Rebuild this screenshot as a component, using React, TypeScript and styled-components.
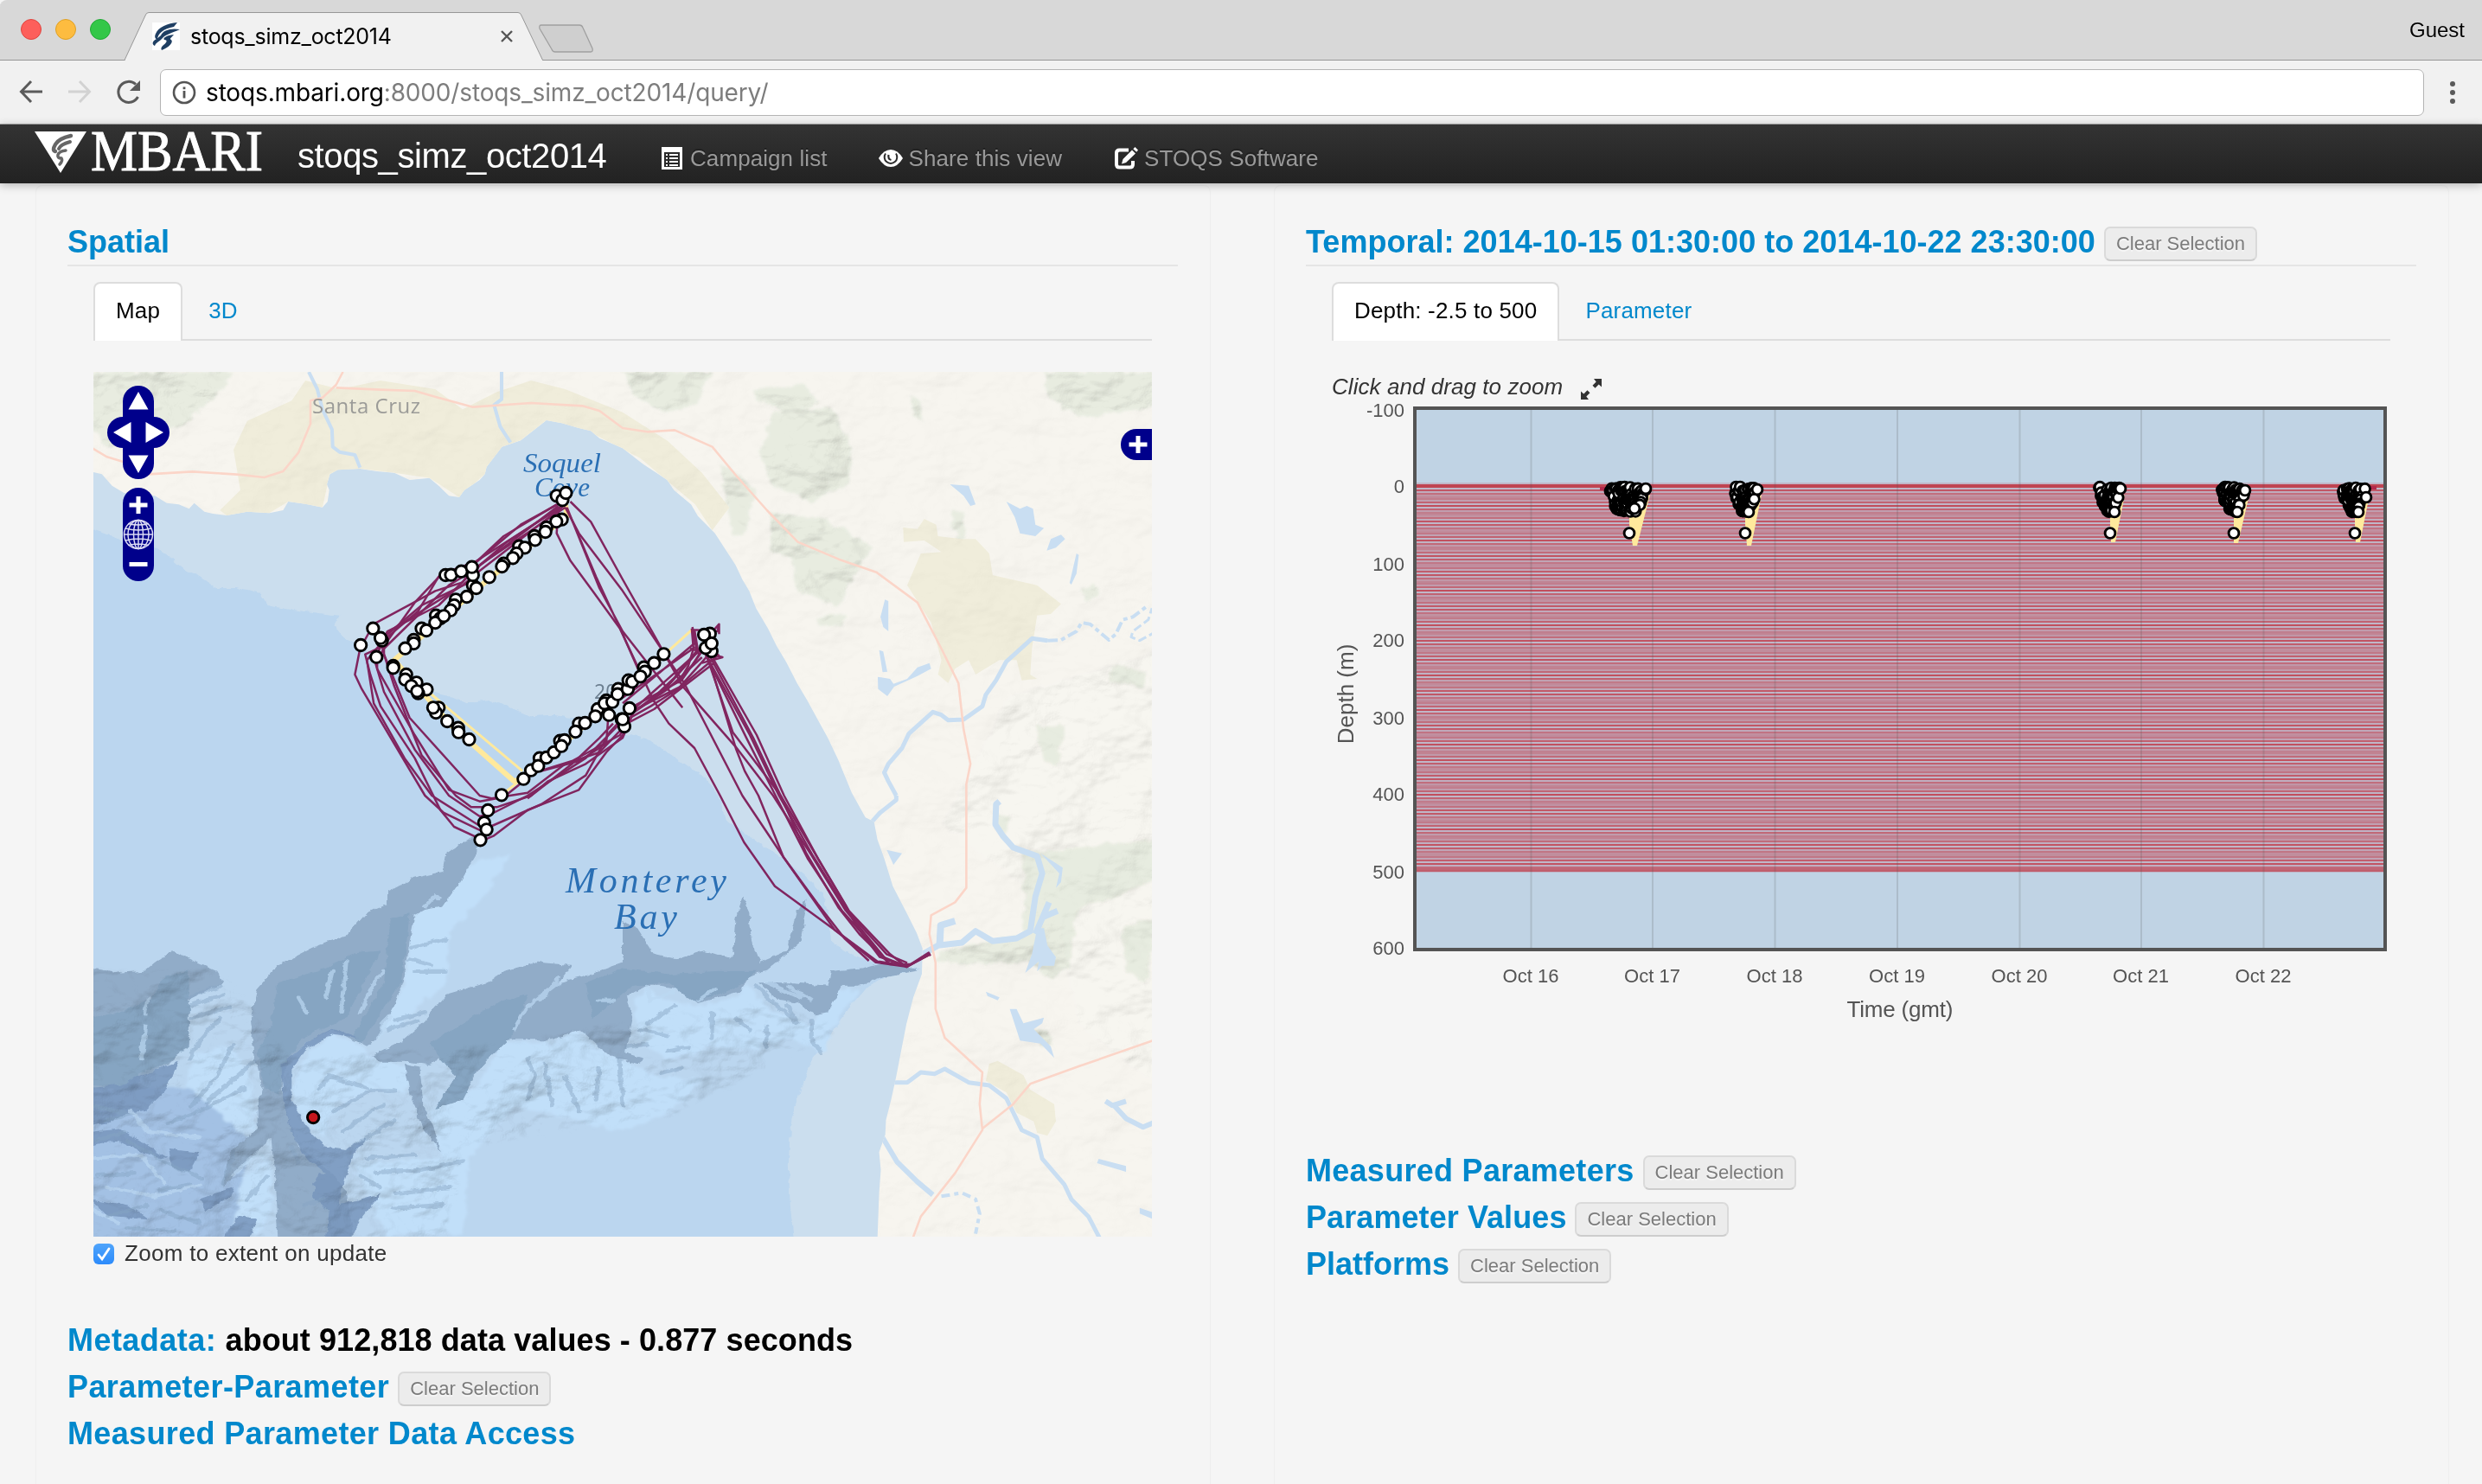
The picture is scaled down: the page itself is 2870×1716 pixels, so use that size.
import React from "react";
import styled, { createGlobalStyle } from "styled-components";

const sans = `"Liberation Sans", Arial, sans-serif`;
const chromeSans = `Inter, "Liberation Sans", sans-serif`;

const GlobalStyle = createGlobalStyle`
  body { margin: 0; background: #f5f5f5; font-family: ${sans}; }
  * { box-sizing: border-box; }
`;

/* ---------- browser chrome ---------- */

const Window = styled.div`
  display: flex;
  flex-direction: column;
  width: 2870px;
  height: 1716px;
  overflow: hidden;
  background: #f5f5f5;
`;

const TabStrip = styled.header`
  display: flex;
  align-items: flex-end;
  height: 70px;
  flex: none;
  background: #d8d8d8;
  box-shadow: inset 0 -1px 0 #979797;
  border-top-left-radius: 8px;
`;

const Lights = styled.div`
  display: flex;
  gap: 16px;
  width: 144px;
  padding: 0 0 24px 24px;
`;

const Light = styled.span<{ $fill: string; $edge: string }>`
  width: 24px;
  height: 24px;
  border-radius: 50%;
  background: ${(p) => p.$fill};
  border: 1px solid ${(p) => p.$edge};
`;

const Tab = styled.div`
  position: relative;
  display: flex;
  align-items: center;
  gap: 12px;
  width: 484px;
  height: 56px;
  padding: 0 34px 0 32px;
`;

const TabShape = styled.svg`
  position: absolute;
  inset: 0;
`;

const Favicon = styled.svg`
  position: relative;
  flex: none;
  background: #fff;
`;

const TabTitle = styled.span`
  position: relative;
  flex: 1;
  font: 25px/30px ${chromeSans};
  letter-spacing: -0.25px;
  color: #000;
`;

const TabClose = styled.svg`
  position: relative;
`;

const NewTab = styled.svg`
  margin: 0 0 8px -6px;
`;

const Guest = styled.span`
  margin: 0 20px 20px auto;
  font: 24px/30px ${sans};
  color: #000;
  text-shadow: 0 1px 0 #f0f0f0;
`;

const Toolbar = styled.div`
  display: flex;
  align-items: center;
  height: 74px;
  flex: none;
  background: #f1f1f1;
  border-bottom: 1px solid #a8a8a8;
`;

const NavButtons = styled.svg`
  width: 185px;
  height: 73px;
  flex: none;
`;

const AddressBar = styled.div`
  display: flex;
  align-items: center;
  gap: 11px;
  width: 2618px;
  height: 54px;
  padding-left: 13px;
  background: #fff;
  border: 1px solid #b4b4b4;
  border-radius: 7px;
`;

const Address = styled.span`
  font: 28px/40px ${chromeSans};
  letter-spacing: -0.15px;
  color: #7d7d7d;
`;

const Host = styled.span`
  color: #000;
`;

const Kebab = styled.div`
  display: flex;
  flex-direction: column;
  gap: 4px;
  margin-left: 30px;
`;

const Dot = styled.i`
  width: 6px;
  height: 6px;
  border-radius: 50%;
  background: #5a5a5a;
`;

/* ---------- site navbar ---------- */

const Navbar = styled.nav`
  display: flex;
  align-items: center;
  height: 68px;
  flex: none;
  padding-left: 40px;
  background: linear-gradient(#333, #222);
  box-shadow: 0 2px 10px rgba(0, 0, 0, 0.28);
  z-index: 1;
`;

const Logo = styled.svg`
  overflow: visible;
`;

const Brand = styled.span`
  margin: 3px 0 0 38px;
  width: 419px;
  font-size: 40px;
  line-height: 50px;
  letter-spacing: -0.4px;
  color: #fff;
`;

const NavLink = styled.a<{ $gap: number }>`
  display: flex;
  align-items: center;
  margin: 9px ${(p) => p.$gap}px 0 0;
  font-size: 26px;
  line-height: 40px;
  letter-spacing: 0.08px;
  color: #999;
  text-shadow: 0 -2px 0 rgba(0, 0, 0, 0.25);
  white-space: nowrap;
`;

const NavIcon = styled.svg`
  width: 28px;
  height: 28px;
  margin-right: 7px;
`;

/* ---------- page body ---------- */

const Main = styled.main`
  display: flex;
  gap: 73px;
  flex: 1;
  padding: 2px 0 0 41px;
`;

const Well = styled.section`
  display: flex;
  flex-direction: column;
  width: 1359px;
  padding: 37px 37px 0 36px;
  border: 1px solid #eeeeee;
  border-bottom: 0;
  border-radius: 8px 8px 0 0;
`;

const HeadingRow = styled.div<{ $ruled?: boolean }>`
  display: flex;
  align-items: center;
  height: ${(p) => (p.$ruled ? 56 : 54)}px;
  border-bottom: ${(p) => (p.$ruled ? "2px solid #e5e5e5" : "0")};
`;

const Heading = styled.h4<{ $spacing?: number }>`
  margin: 2px 0 0;
  font-size: 36px;
  line-height: 54px;
  letter-spacing: ${(p) => p.$spacing ?? 0}px;
  font-weight: bold;
  color: #0088cc;
  white-space: pre;
`;

const Ink = styled.span`
  letter-spacing: 0.08px;
  color: #000;
`;

const ClearButton = styled.button`
  height: 40px;
  margin: 6px 0 0 10px;
  padding: 0 12px;
  border: 2px solid #dadada;
  border-bottom-color: #cdcdcd;
  border-radius: 7px;
  background: #ececec;
  font: 22px/34px ${sans};
  color: #7b7b7b;
  text-shadow: 0 2px 1px rgba(255, 255, 255, 0.6);
  white-space: nowrap;
`;

const Tabs = styled.div`
  display: flex;
  height: 68px;
  margin: 18px 30px 0;
  box-shadow: inset 0 -2px 0 #ddd;
`;

const TabItem = styled.a<{ $active?: boolean }>`
  margin-right: 4px;
  padding: 0 24px;
  border: 2px solid ${(p) => (p.$active ? "#ddd" : "transparent")};
  border-bottom: 0;
  border-radius: 8px 8px 0 0;
  background: ${(p) => (p.$active ? "#fff" : "transparent")};
  font-size: 26px;
  line-height: 62px;
  letter-spacing: 0.18px;
  color: ${(p) => (p.$active ? "#000" : "#0088cc")};
`;

const MapFrame = styled.svg`
  display: block;
  width: 1224px;
  height: 1000px;
  margin: 36px 0 0 30px;
`;

const ZoomRow = styled.label`
  display: flex;
  align-items: center;
  gap: 12px;
  height: 24px;
  margin: 8px 0 60px 30px;
  font-size: 26px;
  line-height: 22px;
  letter-spacing: 0.3px;
  color: #333;
`;

const CheckMark = styled.svg`
  width: 24px;
  height: 24px;
  border-radius: 6px;
  background: linear-gradient(#4fa4fb, #2c8bfb);
`;

const CheckText = styled.span`
  margin-top: -3px;
`;

const Caption = styled.div`
  display: flex;
  align-items: center;
  gap: 20px;
  height: 34px;
  margin: 36px 0 0 30px;
  font-size: 26px;
  letter-spacing: 0.06px;
  font-style: italic;
  color: #333;
`;

const ExpandIcon = styled.svg`
  margin-top: 5px;
`;

const ChartFrame = styled.svg`
  display: block;
  width: 1230px;
  height: 726px;
  margin: 0 0 136px 30px;
  flex: none;
  overflow: visible;
`;

/* ---------- map ---------- */

type Pt = [number, number];

/* Survey-grid units to screen pixels. */
const toPx = ([u, v]: Pt): Pt => [100 + u / 2.529, 420 + v / 3];
const GRID = "translate(100 420) scale(0.39541 0.33333)";
const LOWER = "translate(0 1500) scale(1 1.0142)";

const coast =
  "M20 378 45 385 75 425 110 450 200 460 235 485 270 490 300 505 315 485 345 515 370 522 410 528 470 515 535 520 575 510 590 480 640 488 690 500 705 480 710 440 703 420 712 385 735 370 800 366 850 375 900 380 945 405 1003 398 1030 425 1060 460 1090 465 1105 440 1150 405 1165 385 1170 360 1215 290 1270 268 1345 198 1390 208 1440 225 1475 235 1500 260 1568 295 1628 350 1698 405 1718 440 1768 490 1788 530 1838 590 1868 645 1898 700 1918 750 1938 790 1958 850 1993 920 2018 980 2048 1040 2078 1110 2108 1170 2138 1235 2168 1300 2198 1375 2238 1490 2278 1576 2303 1590 2313 1652 2333 1718 2358 1814 2398 1906 2428 1977 2445 2030 2443 2119 2418 2200 2398 2291 2383 2382 2368 2474 2353 2555 2338 2626 2336 2676 2318 2737 2323 2798 2318 2879 2313 3040 3130 3040 3130 20 10 20Z";

const shelf =
  "M10 570 80 600 150 650 200 640 240 670 290 720 330 740 380 780 440 780 510 800 530 840 600 855 700 870 740 875 725 910 760 960 790 975 850 1020 900 1050 980 1130 1050 1150 1110 1180 1180 1170 1240 1195 1300 1225 1360 1220 1420 1230 1500 1230 1570 1280 1600 1290 1650 1310 1700 1350 1760 1400 1800 1430 1850 1500 1868 1581 1948 1652 2018 1703 2098 1774 2148 1835 2168 1906 2178 2007 2248 2058 2350 2090 2440 2100 2330 2130 2288 2159 2228 2240 2188 2311 2128 2403 2098 2484 2073 2575 2058 2666 2053 2778 2058 2920 2068 3040 10 3040Z";

const canyons = [
  "M10 590 100 605 170 600 200 570 255 530 300 560 380 600 400 640 300 700 300 850 240 920 160 960 140 1010 10 1000Z",
  "M1150 130 1140 200 1090 300 1040 380 990 390 960 410 945 500 930 620 900 720 850 830 820 860 720 800 640 850 590 900 570 1000 590 1100 620 1200 700 1270 760 1350 780 1520 560 1520 550 1300 540 1170 400 1340 420 1220 500 1140 500 1060 515 1000 490 900 480 760 500 660 560 580 660 520 760 480 820 400 880 370 880 330 960 280 1040 260 1050 200 1100 160Z",
  "M835 890 920 840 990 770 1050 680 1170 640 1220 600 1320 570 1420 580 1380 640 1450 620 1568 570 1568 430 1608 450 1658 540 1728 560 1808 530 1888 560 1898 420 1918 350 1938 400 1945 500 1968 570 2048 530 2078 400 2108 350 2088 500 1998 590 1938 620 1908 670 1788 710 1728 660 1678 650 1638 650 1578 690 1598 760 1575 880 1632 900 1610 920 1530 890 1440 800 1360 835 1215 835 1140 950 1100 1040 1020 1070 1080 970 1100 850 1000 920 940 910 860 910Z",
  "M1968 640 2068 640 2168 650 2178 600 2268 590 2328 570 2428 590 2428 600 2328 620 2258 650 2208 650 2168 740 2128 750 2088 710 2018 700Z",
  "M930 920 975 930 985 1060 1040 1220 990 1150 950 1040Z",
];

const deepPatches = [
  "M10 1000 100 990 150 960 270 910 230 1010 170 1080 110 1090 60 1120 10 1130Z",
  "M10 1150 100 1140 240 1240 180 1230 90 1180 10 1200Z",
  "M570 920 640 850 720 795 800 830 720 815 640 870 600 940 600 1040 640 1130 700 1200 760 1210 820 1170 780 1230 750 1330 700 1400 660 1330 700 1290 640 1240 600 1150 575 1040Z",
  "M240 1210 330 1220 300 1290 250 1270Z",
  "M680 1290 750 1320 740 1400 860 1360 800 1450 770 1520 700 1520 710 1420 660 1370Z",
  "M330 1380 430 1340 420 1370 350 1420Z",
  "M400 1520 440 1440 500 1450 470 1520Z",
  "M10 1380 120 1400 180 1450 60 1440Z",
];

const innerCanyon = [
  "M10 760 100 740 190 690 230 620 295 600 300 700 300 860 230 920 150 950 140 1000 10 990Z",
  "M560 640 680 600 780 540 860 530 760 760 700 790 620 840 580 920 560 1020 520 1000 500 880 540 780Z",
  "M890 420 945 400 935 520 920 640 850 760 800 850 780 820 870 640 880 520Z",
  "M1000 850 1100 780 1200 710 1290 680 1240 830 1140 940 1100 1040 1020 1070 1080 960Z",
  "M1460 640 1568 590 1700 610 1850 600 1960 600 1900 660 1780 705 1700 640 1600 650 1480 760Z",
];

const gleams = [
  "M700 690 720 600M745 740 760 560 748 690M620 690 645 740M865 780 890 750 850 830M800 740 850 620 870 600",
  "M160 900 175 780 165 880M180 690 170 750M990 380 1020 340 1030 350",
  "M1250 800 1290 720 1380 640M1380 620 1330 700M1500 700 1540 700",
  "M1640 650 1650 700 1720 670M1790 700 1840 660M1990 640 2090 690M2050 650 2120 700",
  "M130 1080 180 1150 330 1170M20 1240 160 1230 230 1330M60 1340 200 1370 330 1330M20 1420 90 1460M430 1300 500 1220 540 1260M470 1420 540 1380",
];

const creases = [
  "M300 690 390 650M300 720 400 680M310 760 420 720M390 760 330 840 300 900",
  "M310 1060 380 960 430 850M350 1050 440 960 490 910M240 1120 330 1080 460 1000",
  "M950 520 1050 490M945 560 1010 580M960 600 1050 600M900 770 990 740M880 800 970 770",
  "M680 1000 710 960 820 1000M720 1080 830 1010 900 1010M750 1150 830 1080 870 1060M780 1200 900 1110M820 1240 960 1230M850 1290 980 1280 1100 1250M900 1360 1060 1340M900 1410 1040 1400",
  "M1290 900 1310 960 1290 1040M1340 920 1360 1060M1400 960 1440 1080M1500 930 1490 1040M1560 900 1568 1060M1620 800 1700 820M1720 720 1640 780M1830 740 1828 830M1900 760 1940 800M1990 790 1986 860M1580 860 1640 850M1700 870 1760 860M1740 930 1680 950",
  "M1960 650 2000 700 2080 780 2050 720M2120 770 2120 830 2150 880",
  "M20 1060 120 1090 60 1110M30 1180 110 1150M120 1180 240 1260 340 1310M210 1350 300 1330M30 1300 140 1290M60 1440 180 1400M220 1420 330 1460M120 1480 260 1490",
  "M430 1220 400 1330M470 1380 530 1300M600 1200 620 1260M640 1400 690 1380M800 1300 860 1340",
];

const ridges = [
  "M720 815 650 880 600 1000 630 1100 690 1170 740 1050 860 1000 930 1020 950 920 850 910 800 850Z",
  "M1150 220 1240 200 1170 340 1060 470 1050 640 900 800 850 800 930 640 960 410Z",
  "M1215 845 1360 845 1430 800 1500 870 1568 900 1660 960 1800 970 1740 1060 1568 1150 1250 1060 1120 1240 1100 1500 880 1500 780 1260 1040 1240 1000 1080 1140 1000Z",
  "M310 880 420 860 480 960 500 1140 300 1200 200 1170 150 1160 230 1080 290 1000Z",
  "M1600 700 1640 660 1700 700 1780 720 1900 690 1930 640 2000 740 2120 780 2170 720 2190 660 2260 670 2180 800 2160 880 2060 830 1960 870 1830 860 1700 900 1620 850Z",
  "M870 600 880 610 850 720 840 800 760 820 800 690Z",
  "M440 1310 540 1240 540 1420 500 1500 400 1420Z",
];

const urban = [
  "M430 300 470 200 600 130 640 60 740 90 860 60 1020 90 1100 160 1200 100 1300 60 1400 90 1568 170 1700 270 1800 380 1880 500 1830 580 1780 490 1620 330 1490 250 1345 198 1270 268 1215 290 1165 385 1090 465 1003 398 900 380 800 366 712 385 690 500 590 480 535 520 410 528 390 510 450 440Z",
  "M2388 570 2430 575 2450 540 2485 560 2490 600 2560 610 2600 610 2640 660 2650 735 2780 770 2850 835 2820 870 2780 875 2765 990 2760 1080 2780 1095 2735 1100 2720 1030 2670 1030 2600 1080 2580 1030 2540 1060 2520 1110 2490 1080 2500 1030 2470 900 2400 770 2440 660 2500 655 2450 615 2390 620Z",
  "M2640 2430 2665 2420 2740 2470 2760 2520 2830 2570 2835 2630 2810 2680 2780 2670 2770 2630 2720 2600 2690 2530 2630 2490Z",
];

const greens = [
  "M10 30 430 30 380 110 300 200 200 260 60 290 10 220Z",
  "M1568 30 1830 30 1780 150 1690 170 1600 110Z",
  "M2010 170 2180 150 2240 300 2230 420 2120 480 2000 420 1970 300Z",
  "M2000 520 2160 540 2300 640 2240 740 2200 850 2080 790 2060 680 2000 640Z",
  "M1950 90 2090 70 2140 130 2060 180 1960 130Z",
  "M2800 30 3130 30 3130 150 2900 190 2810 110Z",
  "M1850 340 1960 440 1930 580 1890 600Z",
  "M2410 120 2440 130 2450 200 2420 180Z",
  "M2535 510 2565 520 2570 600 2550 620 2530 570Z",
  "M2140 880 2220 870 2210 915 2140 910Z",
  "M2910 780 2950 770 2960 810 2920 820Z",
  "M2780 1260 2860 1260 2840 1400 2800 1380Z",
  "M3000 1050 3100 1070 3090 1120 2990 1110Z",
  "M2740 1700 3130 1650 3130 1790 2900 1900 2870 2100 2820 2140 2760 2080 2480 2080 2500 2040 2740 1980Z",
  "M2660 1560 2700 1580 2680 1650 2660 1620Z",
  "M2740 2300 2800 2310 2830 2370 2790 2370Z",
  "M3030 1960 3130 1920 3100 2150 3040 2110Z",
];

const lakes = [
  "M2525 420 2580 425 2600 490 2585 495 2565 460Z",
  "M2690 480 2730 505 2750 495 2768 505 2775 560 2800 572 2775 600 2730 590 2715 535Z",
  "M2808 650 2820 610 2850 595 2862 610 2835 640Z",
  "M2895 660 2902 665 2895 730 2880 768 2875 762Z",
  "M2335 820 2345 825 2345 930 2330 915 2322 880Z",
  "M2318 995 2330 1000 2342 1070 2328 1072Z",
  "M2314 1088 2350 1095 2360 1112 2400 1095 2430 1055 2465 1040 2470 1060 2430 1085 2362 1122 2342 1155 2315 1130Z",
  "M2340 1688 2385 1700 2360 1740Z",
  "M2780 1960 2800 1960 2810 2020 2835 2060 2830 2090 2795 2090 2780 2110 2785 2075 2745 2115 2765 2050Z",
  "M2790 1700 2855 1750 2850 1800 2835 1820 2845 1770Z",
  "M2700 2240 2720 2240 2740 2290 2800 2270 2795 2290 2770 2310 2820 2370 2830 2410 2790 2360 2730 2350Z",
  "M2630 2180 2670 2200 2665 2210 2635 2195Z",
  "M2960 2760 3040 2785 3040 2805 2955 2775Z",
  "M3080 2930 3130 2950 3130 2975 3080 2950Z",
];

const rivers: { d: string; w: number; dash?: string }[] = [
  { d: "M650 30 675 90 690 160 718 230 720 290 740 308 785 318 800 362", w: 4 },
  { d: "M1214 30 1214 125 1192 145 1210 220 1240 275", w: 4 },
  { d: "M2368 1500 2345 1450 2333 1420 2345 1390 2385 1335 2405 1285 2475 1210 2500 1220 2520 1238 2565 1236 2620 1190 2630 1150 2660 1100 2690 1035 2765 955 2810 962", w: 5 },
  { d: "M2810 962 2850 960 2895 930 2910 900 2935 905 2990 960 3010 940 3030 890 3060 880 3105 840", w: 4, dash: "12 4 5 4" },
  { d: "M3130 930 3080 962 3055 950 3060 930 3105 890 3116 850", w: 3, dash: "10 4" },
  { d: "M2368 1500 2368 1515 2320 1560 2290 1600", w: 5 },
  { d: "M2445 2050 2490 2020 2560 2010 2600 1970 2650 2005 2720 1995 2760 1970 2775 1850 2795 1770 2780 1710 2710 1680 2680 1640 2658 1600 2660 1530 2670 1520", w: 7 },
  { d: "M2495 2020 2498 1950 2540 1935", w: 8 },
  { d: "M2775 1980 2815 1870M2800 1920 2840 1900", w: 7 },
  { d: "M2350 2495 2400 2495 2440 2460 2480 2465 2510 2448 2580 2495 2640 2505 2690 2550 2735 2660 2780 2685 2795 2760 2860 2850 2880 2900 2930 2960 2965 3040", w: 5 },
  { d: "M2320 2670 2370 2770 2430 2840 2475 2885", w: 6 },
  { d: "M2500 2890 2560 2878 2600 2900 2612 2950 2600 3020", w: 4, dash: "10 5 5 5" },
  { d: "M2980 2560 3000 2575 3040 2560M3005 2575 3040 2620 3090 2650 3130 2630", w: 6 },
];

const roads = [
  "M10 290 60 325 130 350 180 385 310 376 440 386 520 396 575 375 620 310 655 210 655 130 690 120 730 75 750 30",
  "M730 85 860 92 960 96 1030 120 1130 152 1300 138 1450 148 1500 165 1568 225 1640 238 1720 232 1830 290 1900 390 1990 510 2080 620 2200 680 2310 725 2430 830 2500 990 2550 1110 2565 1270 2585 1390 2573 1460 2573 1820 2540 1870 2470 1915 2465 1980 2483 2080 2483 2240 2510 2340 2620 2460 2612 2570 2620 2660 2540 2810 2440 2960 2415 3040",
  "M2620 2655 2710 2570 2760 2500 2900 2440 3130 2345",
];

const tracks = [
  "1400 490 1135 690 1040 730 960 830 870 980 815 1010 830 1080 860 1190 960 1370 1035 1550 1075 1608 1160 1655 1190 1640 1290 1550 1440 1480 1520 1350 1568 1290 1600 1210 1700 1120 1810 970",
  "1385 485 1270 560 1140 690 1100 760 1020 790 840 905 800 990 785 1080 805 1130 890 1300 990 1500 1045 1560 1150 1620 1180 1608 1330 1530 1460 1430 1530 1280 1600 1190 1740 1100 1800 1000",
  "1380 495 1130 720 1060 770 870 990 845 1040 870 1140 960 1340 1060 1500 1150 1572 1190 1560 1290 1500 1460 1370 1560 1250 1650 1190 1730 1130 1820 1010",
  "1390 500 1150 720 1100 770 900 920 860 960 870 1010 945 1230 1150 1500 1185 1510 1290 1490 1400 1390 1500 1350 1580 1250 1660 1200 1835 1040",
  "1375 490 1220 600 1130 700 1030 740 970 860 870 960 820 1030 840 1180 930 1370 1010 1500 1150 1605",
  "1390 495 1230 620 1150 700 1120 760 980 840 870 950 870 1010 900 1120 980 1360 1080 1500 1125 1540 1200 1540 1300 1500 1350 1450 1460 1390 1568 1300 1600 1210",
  "1400 500 1150 700 1030 840 880 930 850 1010 850 1060 960 1290 1060 1480 1150 1520 1220 1505 1310 1420 1420 1380 1560 1290 1610 1190 1790 1000",
  "1330 1415 1440 1380 1520 1320 1525 1240M1290 1510 1420 1390 1500 1300 1540 1250",
  "1568 1180 1780 970M1568 1160 1780 985M1590 1210 1740 1120 1850 1010",
  "1640 1180 1720 1090 1790 990M1590 1220 1700 1130 1800 1020M1720 1110 1770 1050 1830 940",
  "1770 920 1775 990 1760 1050 1730 1110M1775 925 1845 930 1850 905 1835 925 1800 960M1765 990 1860 1020 1800 1040M1772 915 1785 1000M1778 925 1790 1010M1850 905 1850 940",
  "1380 500 1375 590 1415 685 1480 790 1560 920 1658 1170 1703 1250 1778 1335 1853 1500 1923 1662 2013 1814 2188 1966 2308 2078 2398 2093 2463 2053",
  "1415 480 1475 550 1568 750 1663 950 1743 1120 1898 1330 2008 1500 2118 1703 2218 1895 2338 2068 2398 2093 2463 2053",
  "1400 500 1440 590 1568 790 1748 1110 1918 1500 2038 1713 2138 1875 2218 1997 2288 2073",
  "1405 500 1500 780 1568 930 1743 1195M1415 530 1490 740 1568 940 1620 1080",
  "1813 1000 1900 1340 1925 1415 1965 1500 2038 1713 2188 1966 2313 2075 2395 2090",
  "1810 1010 1930 1300 2015 1500 2110 1720 2210 1900 2330 2060 2400 2094 2465 2050",
  "1815 1020 1940 1290 2025 1500 2125 1710 2225 1900 2340 2050 2400 2080",
  "1820 1010 1950 1300 2030 1500 2130 1700 2220 1880 2250 1950 2320 2060 2390 2088",
  "1835 1030 1960 1290 2040 1500 2140 1720 2230 1900 2350 2050 2400 2096",
  "1812 1010 1890 1280 1960 1390 2030 1500 2105 1700 2200 1890 2260 1980 2350 2085 2410 2085 2463 2045 2468 2056",
];

const stations: Pt[] = [
  [1375, 460], [1392, 475], [1402, 450], [1390, 542], [1374, 549], [1345, 570], [1342, 585], [1310, 600], [1312, 613],
  [1265, 635], [1282, 640], [1258, 660], [1247, 676], [1220, 695], [1215, 705], [1178, 742], [1130, 770], [1140, 780],
  [1112, 810], [1080, 820], [1075, 840], [1065, 857], [1022, 875], [1035, 885], [1020, 900], [1045, 877], [980, 920],
  [994, 927], [957, 960], [957, 972], [932, 989], [1050, 735], [1066, 734], [1096, 722], [1130, 735], [1127, 707],
  [838, 920], [864, 962], [860, 953], [802, 978], [848, 1019], [897, 1050], [897, 1057], [935, 1080], [932, 1097],
  [965, 1108], [950, 1120], [995, 1132], [970, 1145], [967, 1138], [1030, 1195], [1022, 1212], [1014, 1195],
  [1055, 1242], [1087, 1265], [1088, 1280], [1119, 1305], [1278, 1442], [1300, 1412], [1325, 1370], [1321, 1397],
  [1345, 1368], [1367, 1350], [1385, 1310], [1398, 1308], [1389, 1328], [1440, 1250], [1430, 1278], [1458, 1248],
  [1495, 1200], [1488, 1225], [1520, 1170], [1515, 1180], [1538, 1175], [1555, 1130], [1553, 1148], [1528, 1220],
  [1565, 1235], [1573, 1260], [1588, 1197], [1568, 1235], [1583, 1130], [1585, 1100], [1596, 1105], [1630, 1055],
  [1633, 1070], [1620, 1087], [1660, 1040], [1688, 1009], [1823, 938], [1806, 942], [1828, 999], [1811, 988],
  [1828, 972], [1214, 1498], [1174, 1551], [1163, 1594], [1170, 1618], [1152, 1654],
];

function Marker({ at, fill = "#fff", r = 6.7 }: { at: Pt; fill?: string; r?: number }) {
  return <circle cx={at[0]} cy={at[1]} r={r} fill={fill} stroke="#000" strokeWidth={2.9} />;
}

function BayMap() {
  return (
    <MapFrame viewBox="108 430 1224 1000">
      <defs>
        <filter id="ragged" x="-5%" y="-5%" width="110%" height="110%">
          <feTurbulence type="fractalNoise" baseFrequency="0.035" numOctaves="3" seed="4" />
          <feDisplacementMap in="SourceGraphic" scale="18" xChannelSelector="R" yChannelSelector="G" />
          <feGaussianBlur stdDeviation="1.8" />
        </filter>
        <filter id="soft" x="-10%" y="-10%" width="120%" height="120%">
          <feTurbulence type="fractalNoise" baseFrequency="0.03" numOctaves="3" seed="9" />
          <feDisplacementMap in="SourceGraphic" scale="30" xChannelSelector="R" yChannelSelector="G" />
          <feGaussianBlur stdDeviation="4" />
        </filter>
        <filter id="relief" x="0" y="0" width="100%" height="100%">
          <feTurbulence type="fractalNoise" baseFrequency="0.012 0.018" numOctaves="4" seed="21" />
          <feColorMatrix values="0 0 0 0 0  0 0 0 0 0  0 0 0 0 0  1 0 0 0 0" />
          <feDiffuseLighting surfaceScale="30" diffuseConstant="1.15" lightingColor="#fff">
            <feDistantLight azimuth="225" elevation="60" />
          </feDiffuseLighting>
        </filter>
        <clipPath id="landClip">
          <path d={coast} transform={GRID} />
        </clipPath>
        <mask id="hillMask">
          <rect x="108" y="430" width="1224" height="1000" fill="#333" />
          <g transform={GRID} fill="#fff" filter="url(#soft)">
            {greens.map((d) => (
              <path key={d} d={d} />
            ))}
            <path d="M2700 1150 3130 1000 3130 2500 2900 2300 2840 1900 2500 1600Z" fill="#999" />
          </g>
        </mask>
        <mask id="deepMask">
          <g transform={GRID} filter="url(#soft)">
            <g transform={LOWER}>
              <path d="M10 600 400 600 600 900 900 880 1200 850 2000 700 2200 800 1700 1100 1100 1200 1050 1520 10 1520Z" fill="#fff" />
            </g>
          </g>
        </mask>
      </defs>

      <rect x="108" y="430" width="1224" height="1000" fill="#cbdeee" />
      <g transform={GRID}>
        <path d={shelf} fill="#bbd6ef" filter="url(#ragged)" />
        <g transform={LOWER}>
          <g fill="#c1dff9" filter="url(#soft)">
            {ridges.map((d) => (
              <path key={d} d={d} />
            ))}
            <path d="M10 1000 300 1000 480 1180 420 1520 10 1520Z" fill="#a3c1e4" />
          </g>
          <g fill="#91acc8" filter="url(#ragged)">
            {canyons.map((d) => (
              <path key={d} d={d} />
            ))}
          </g>
          <g fill="#86a5c2" filter="url(#ragged)">
            {innerCanyon.map((d) => (
              <path key={d} d={d} />
            ))}
          </g>
          <g fill="#7896bd" opacity="0.85" filter="url(#ragged)">
            {deepPatches.map((d) => (
              <path key={d} d={d} />
            ))}
          </g>
          <g fill="none" stroke="#bcd9f3" strokeWidth="12" strokeLinecap="round" opacity="0.7" filter="url(#ragged)">
            {gleams.map((d) => (
              <path key={d} d={d} />
            ))}
          </g>
          <g fill="none" stroke="#86a5c4" strokeWidth="13" strokeLinecap="round" opacity="0.45" filter="url(#ragged)">
            {creases.map((d) => (
              <path key={d} d={d} />
            ))}
          </g>
        </g>
      </g>
      <g mask="url(#deepMask)" style={{ mixBlendMode: "multiply" }}>
        <rect x="108" y="1030" width="1224" height="400" filter="url(#relief)" opacity="0.22" />
      </g>

      <path d={coast} transform={GRID} fill="#f7f5ef" />
      <g clipPath="url(#landClip)">
        <g transform={GRID}>
          <g fill="#e2e8da" opacity="0.75" filter="url(#soft)">
            {greens.map((d) => (
              <path key={d} d={d} />
            ))}
          </g>
          <g fill="#f0eddb">
            {urban.map((d) => (
              <path key={d} d={d} />
            ))}
          </g>
        </g>
        <g mask="url(#hillMask)" style={{ mixBlendMode: "multiply" }}>
          <rect x="108" y="430" width="1224" height="1000" filter="url(#relief)" opacity="0.17" />
        </g>
        <g transform={GRID}>
          <g fill="#c9def2">
            {lakes.map((d) => (
              <path key={d} d={d} />
            ))}
          </g>
          <g fill="none" stroke="#c9def2" strokeLinejoin="round">
            {rivers.map((r) => (
              <path key={r.d} d={r.d} strokeWidth={r.w} strokeDasharray={r.dash} vectorEffect="non-scaling-stroke" />
            ))}
          </g>
          <g fill="none" stroke="#fbd5c8" strokeWidth="2.6" strokeLinejoin="round">
            {roads.map((d) => (
              <path key={d} d={d} vectorEffect="non-scaling-stroke" />
            ))}
          </g>
        </g>
      </g>

      <text x="361" y="478" fontFamily='"Open Sans", sans-serif' fontSize="24" fill="#9b9b98" textLength="125">
        Santa Cruz
      </text>
      <g fontFamily='"Liberation Serif", serif' fontStyle="italic" fill="#2a6fb4">
        <text fontSize="31">
          <tspan x="605" y="546" textLength="90" lengthAdjust="spacingAndGlyphs">Soquel</tspan>
          <tspan x="618" y="574" textLength="64" lengthAdjust="spacingAndGlyphs">Cove</tspan>
        </text>
        <text x="654" y="1032" fontSize="42" textLength="186">Monterey</text>
        <text x="710" y="1074" fontSize="42" textLength="73">Bay</text>
      </g>
      <text x="687" y="808" fontFamily='"Open Sans", sans-serif' fontSize="23" fill="#6c7f90">20</text>

      <g transform={GRID} fill="none" stroke="#ffe99c" strokeLinejoin="round">
        <path d="M1400 480 1405 530 1180 745 900 1030 1070 1260 1250 1450 1280 1440 1568 1140 1700 1000" strokeWidth="6" vectorEffect="non-scaling-stroke" />
        <path d="M1000 1140 1275 1415M1700 1000 1770 925M1214 1498 1270 1445" strokeWidth="3" vectorEffect="non-scaling-stroke" />
      </g>
      <g transform={GRID} fill="none" stroke="#7a1250" strokeWidth="2.5" strokeLinejoin="round" opacity="0.9">
        {tracks.map((d) => (
          <path key={d} d={"M" + d} vectorEffect="non-scaling-stroke" />
        ))}
      </g>
      {stations.map((p, i) => (
        <Marker key={i} at={toPx(p)} />
      ))}
      <Marker at={toPx([663, 2616])} fill="#c4161c" />

      <g fill="#00008b">
        <rect x="142" y="446" width="36" height="108" rx="18" />
        <rect x="124" y="482" width="72" height="36" rx="18" />
        <rect x="142" y="564" width="36" height="108" rx="18" />
        <path d="M1332 496h-18a18 18 0 0 0 0 36h18z" />
      </g>
      <g fill="#fff">
        <path d="M160 453 171.500 473.500h-23zM160 547l11.500-20.500h-23zM131 500l20.500-12v24zM189 500l-20.500-12v24z" />
        <path d="M157.500 574h5v7.500h8v5h-8v7.500h-5v-7.500h-8v-5h8zM149.500 650h21v5h-21z" />
        <path d="M1313.500 504h5v7.500h8v5h-8v7.500h-5v-7.500h-8v-5h8z" />
      </g>
      <g fill="none" stroke="#dcdcf4" strokeWidth="1.5">
        <circle cx="160" cy="618" r="16.500" />
        <ellipse cx="160" cy="618" rx="5.500" ry="16.500" />
        <ellipse cx="160" cy="618" rx="12" ry="16.500" />
        <path d="M143.500 618h33M145 611q15 4 30 0M145 625q15-4 30 0M148 605.500q12 3 24 0M148 630.500q12-3 24 0M160 601.500v33" />
      </g>
    </MapFrame>
  );
}

/* ---------- depth / time chart ---------- */

const days: [string, number][] = [
  ["Oct 16", 1770.5], ["Oct 17", 1911], ["Oct 18", 2052.5], ["Oct 19", 2194],
  ["Oct 20", 2335.5], ["Oct 21", 2476], ["Oct 22", 2617.5],
];
const depths: [string, number][] = [
  ["-100", 482], ["0", 570], ["100", 660], ["200", 748], ["300", 838], ["400", 926], ["500", 1016], ["600", 1104],
];

/* Coverage of each two-pixel row by the evenly spaced depth lines. */
const rows: { y: number; a: number }[] = [];
for (let row = 280; row < 504; row++) {
  let a = 0;
  for (let n = -6; n < 96; n++) {
    const c = 292.5 + n * 2.2265;
    a += Math.max(0, Math.min(c + 0.5, row + 1) - Math.max(c - 0.5, row));
  }
  rows.push({ y: row * 2, a: Math.min(1, a) });
}

const casts = [
  { l: 1861, r: 1903, single: 1884, tail: 1891, top: [1903, 565], low: [1890, 588], end: 631 },
  { l: 2005, r: 2032, single: 2018, tail: 2023, top: [2032, 566], low: [2022, 592], end: 631 },
  { l: 2427, r: 2452, single: 2440, tail: 2444, top: [2452, 565], low: [2445, 592], end: 627 },
  { l: 2569, r: 2596, single: 2583, tail: 2586, top: [2596, 567], low: [2587, 592], end: 628 },
  { l: 2709, r: 2735, single: 2723, tail: 2727, top: [2736, 575], low: [2727, 592], end: 627 },
];

function castPoints(l: number, r: number, seed: number): Pt[] {
  let s = seed * 7919;
  const rnd = () => ((s = (s * 16807) % 2147483647) / 2147483647);
  const out: Pt[] = [];
  const count = Math.round((r - l) * 1.7 + 22);
  for (let i = 0; i < count; i++) {
    const y = 563 + rnd() * 29;
    const inset = Math.max(0, y - 572) * 0.5;
    const span = r - l - inset - Math.max(0, y - 570) * 0.45;
    out.push([l + inset + (i / count) * Math.max(6, span), y]);
  }
  return out;
}

function DepthChart() {
  return (
    <ChartFrame viewBox="1540 464 1230 726">
      <rect x="1636" y="472" width="1122" height="626" fill="#c0d3e4" />
      <rect x="1638" y="558" width="1118" height="451" fill="#c04050" opacity="0.19" />
      {rows.map((r) => (
        <rect key={r.y} x="1638" y={r.y} width="1118" height="2" fill="#c23745" opacity={r.a * 0.83} />
      ))}
      <rect x="1638" y="560" width="1118" height="4" fill="#c04452" />
      <rect x="1638" y="1004" width="1118" height="4" fill="#c04452" opacity="0.6" />
      <g stroke="#545454" strokeOpacity="0.18" strokeWidth="2">
        {days.map(([d, x]) => (
          <path key={d} d={`M${x} 474V1096`} />
        ))}
      </g>
      <path d="M1850 565h60M2722 564h26" stroke="#b32a4c" strokeWidth="4" />
      {casts.map((c, i) => (
        <g key={c.l}>
          <path d={`M${c.r + 5} 572 ${c.tail + 2} ${c.end}h-5L${c.single} 606V590z`} fill="#ffe99c" />
          {castPoints(c.l, c.r, 77 + i * 31).map((p, k) => (
            <Marker key={k} at={p} r={5.9} />
          ))}
          <Marker at={c.low as Pt} r={5.9} />
          <Marker at={c.top as Pt} r={5.9} />
          <Marker at={[c.single, 616.5]} r={5.9} />
        </g>
      ))}
      <rect x="1636" y="472" width="1122" height="626" fill="none" stroke="#545454" strokeWidth="4" />
      <g fontFamily={sans} fill="#545454">
        <g fontSize="22" textAnchor="end">
          {depths.map(([d, y]) => (
            <text key={d} x="1624" y={y}>{d}</text>
          ))}
        </g>
        <g fontSize="22" textAnchor="middle">
          {days.map(([d, x]) => (
            <text key={d} x={x - 0.5} y="1136">{d}</text>
          ))}
        </g>
        <text x="2197" y="1176" fontSize="26" textAnchor="middle" textLength="123">Time (gmt)</text>
        <text transform="translate(1565 802.5) rotate(-90)" fontSize="26" textAnchor="middle">Depth (m)</text>
      </g>
    </ChartFrame>
  );
}

/* ---------- logos and icons ---------- */

function MbariLogo() {
  return (
    <Logo width="266" height="60" viewBox="40 148 266 60">
      <path d="M40 152h60L70 200z" fill="#fff" />
      <g fill="none" stroke="#666" strokeLinecap="round">
        <path d="M82 157q-14 3-18 10t0 8" strokeWidth="4.5" />
        <path d="M81 164q-11 3-13 8" strokeWidth="4" />
        <path d="M76 174q-8 1-9 5t4 4q2 3-2 7" strokeWidth="3.5" />
      </g>
      <text
        x="105"
        y="197"
        fontFamily='"Liberation Serif", serif'
        fontSize="67"
        fill="#fff"
        stroke="#fff"
        strokeWidth="1"
        textLength="199"
        lengthAdjust="spacingAndGlyphs"
      >
        MBARI
      </text>
    </Logo>
  );
}

function FaviconMark() {
  return (
    <Favicon width="32" height="32" viewBox="0 0 32 32">
      <g fill="#1f3f63">
        <path d="M29 0C18 1 7 5 4 13c-2 4 0 6 2 7 0-7 7-13 19-15z" />
        <path d="M32 8C22 6 12 9 10 15l-5 4c-6 3-5 7-2 8 1-4 6-5 9-9 3-4 9-5 20-10z" />
        <path d="M25 14c-9 1-13 4-11 6 5 0 2 4-2 7-2 2-2 4-1 5 8-3 14-9 11-12-3-1 1-3 3-6z" />
      </g>
    </Favicon>
  );
}

function ClearSelection() {
  return <ClearButton type="button">Clear Selection</ClearButton>;
}

export default function App() {
  return (
    <Window>
      <GlobalStyle />
      <TabStrip>
        <Lights>
          <Light $fill="#fd5f5b" $edge="#e0443e" />
          <Light $fill="#fdbc40" $edge="#dfa023" />
          <Light $fill="#33c748" $edge="#1fa934" />
        </Lights>
        <Tab>
          <TabShape width="484" height="56" viewBox="0 0 484 56">
            <path d="M0 55.500 24 4q1-3.500 4-3.500H455q3 0 4 3.500L483.500 55.500" fill="#f1f1f1" stroke="#979797" />
            <path d="M1 55.500H483" stroke="#f1f1f1" />
          </TabShape>
          <FaviconMark />
          <TabTitle>stoqs_simz_oct2014</TabTitle>
          <TabClose width="16" height="16" viewBox="0 0 16 16">
            <path d="M2 2 14 14M14 2 2 14" stroke="#555" strokeWidth="2.4" />
          </TabClose>
        </Tab>
        <NewTab width="66" height="34" viewBox="0 0 66 34">
          <path d="M4 1h44q3 0 4 3l11 24q1 4-2 4H20q-3 0-4-3L2 5q-1-4 2-4z" fill="#cfcfcf" stroke="#a0a0a0" strokeWidth="1.3" />
        </NewTab>
        <Guest>Guest</Guest>
      </TabStrip>
      <Toolbar>
        <NavButtons viewBox="0 70 185 73">
          <g fill="none" strokeWidth="3">
            <path d="M49 106H25M36 94 24.500 106 36 118" stroke="#5a5a5a" />
            <path d="M79 106h24M92 94l11.500 12L92 118" stroke="#d2d2d2" />
            <path d="M159.500 112A12 12 0 1 1 157 97.500" stroke="#5a5a5a" />
          </g>
          <path d="M162 93v12h-12z" fill="#5a5a5a" />
        </NavButtons>
        <AddressBar>
          <svg width="28" height="28" viewBox="0 0 28 28">
            <circle cx="14" cy="14" r="12" fill="none" stroke="#555" strokeWidth="2.6" />
            <path d="M12.600 12h2.800v8.500h-2.800zM12.600 7.500h2.800v2.800h-2.800z" fill="#555" />
          </svg>
          <Address>
            <Host>stoqs.mbari.org</Host>:8000/stoqs_simz_oct2014/query/
          </Address>
        </AddressBar>
        <Kebab>
          <Dot />
          <Dot />
          <Dot />
        </Kebab>
      </Toolbar>
      <Navbar>
        <MbariLogo />
        <Brand>stoqs_simz_oct2014</Brand>
        <NavLink $gap={59}>
          <NavIcon viewBox="0 0 28 28">
            <path d="M2 1h24v26H2zM5 7v17h18V7z" fill="#fff" fillRule="evenodd" />
            <path d="M7 9h2v2H7zM11 9h10v2H11zM7 13h2v2H7zM11 13h10v2H11zM7 17h2v2H7zM11 17h10v2H11zM7 21h2v2H7zM11 21h10v2H11z" fill="#fff" />
          </NavIcon>
          Campaign list
        </NavLink>
        <NavLink $gap={60}>
          <NavIcon viewBox="0 0 28 28">
            <path d="M0 14Q6 4 14 4T28 14Q22 24 14 24T0 14z" fill="#fff" />
            <path d="M8 8.500a7.300 7.300 0 1 0 12 0" fill="none" stroke="#2b2b2b" strokeWidth="2" />
            <path d="M11.500 10q-1 5 3 6" fill="none" stroke="#2b2b2b" strokeWidth="2.2" />
          </NavIcon>
          Share this view
        </NavLink>
        <NavLink $gap={0}>
          <NavIcon viewBox="0 0 28 28">
            <path d="M17 4.500H6.500Q3 4.500 3 8v13q0 3.500 3.500 3.500h12q3.500 0 3.500-3.500v-4" fill="none" stroke="#fff" strokeWidth="4" />
            <path d="M21 4.500 25 8.500 14 19l-5 1.500L10.500 15zM22.300 3.200 24.500 1 28 4.500 26.200 6.800z" fill="#fff" />
          </NavIcon>
          STOQS Software
        </NavLink>
      </Navbar>
      <Main>
        <Well>
          <HeadingRow $ruled>
            <Heading>Spatial</Heading>
          </HeadingRow>
          <Tabs>
            <TabItem $active>Map</TabItem>
            <TabItem>3D</TabItem>
          </Tabs>
          <BayMap />
          <ZoomRow>
            <CheckMark viewBox="0 0 24 24">
              <path d="M6 13 10 18 18 6" fill="none" stroke="#fff" strokeWidth="2.8" strokeLinecap="round" />
            </CheckMark>
            <CheckText>Zoom to extent on update</CheckText>
          </ZoomRow>
          <HeadingRow>
            <Heading $spacing={0.45}>
              Metadata: <Ink>about 912,818 data values - 0.877 seconds</Ink>
            </Heading>
          </HeadingRow>
          <HeadingRow>
            <Heading $spacing={0.42}>Parameter-Parameter</Heading>
            <ClearSelection />
          </HeadingRow>
          <HeadingRow>
            <Heading $spacing={0.35}>Measured Parameter Data Access</Heading>
          </HeadingRow>
        </Well>
        <Well>
          <HeadingRow $ruled>
            <Heading $spacing={0.02}>Temporal: 2014-10-15 01:30:00 to 2014-10-22 23:30:00</Heading>
            <ClearSelection />
          </HeadingRow>
          <Tabs>
            <TabItem $active>Depth: -2.5 to 500</TabItem>
            <TabItem>Parameter</TabItem>
          </Tabs>
          <Caption>
            Click and drag to zoom
            <ExpandIcon width="26" height="26" viewBox="0 0 26 26">
              <path d="M25 1v9.500l-3.300-3-4.200 4.200-3-3L18.700 4.500 16 1zM1 25v-9.500l3.300 3 4.200-4.200 3 3L7.300 21.500 10 25z" fill="#333" />
            </ExpandIcon>
          </Caption>
          <DepthChart />
          <HeadingRow>
            <Heading $spacing={0.28}>Measured Parameters</Heading>
            <ClearSelection />
          </HeadingRow>
          <HeadingRow>
            <Heading $spacing={0.08}>Parameter Values</Heading>
            <ClearSelection />
          </HeadingRow>
          <HeadingRow>
            <Heading>Platforms</Heading>
            <ClearSelection />
          </HeadingRow>
        </Well>
      </Main>
    </Window>
  );
}
